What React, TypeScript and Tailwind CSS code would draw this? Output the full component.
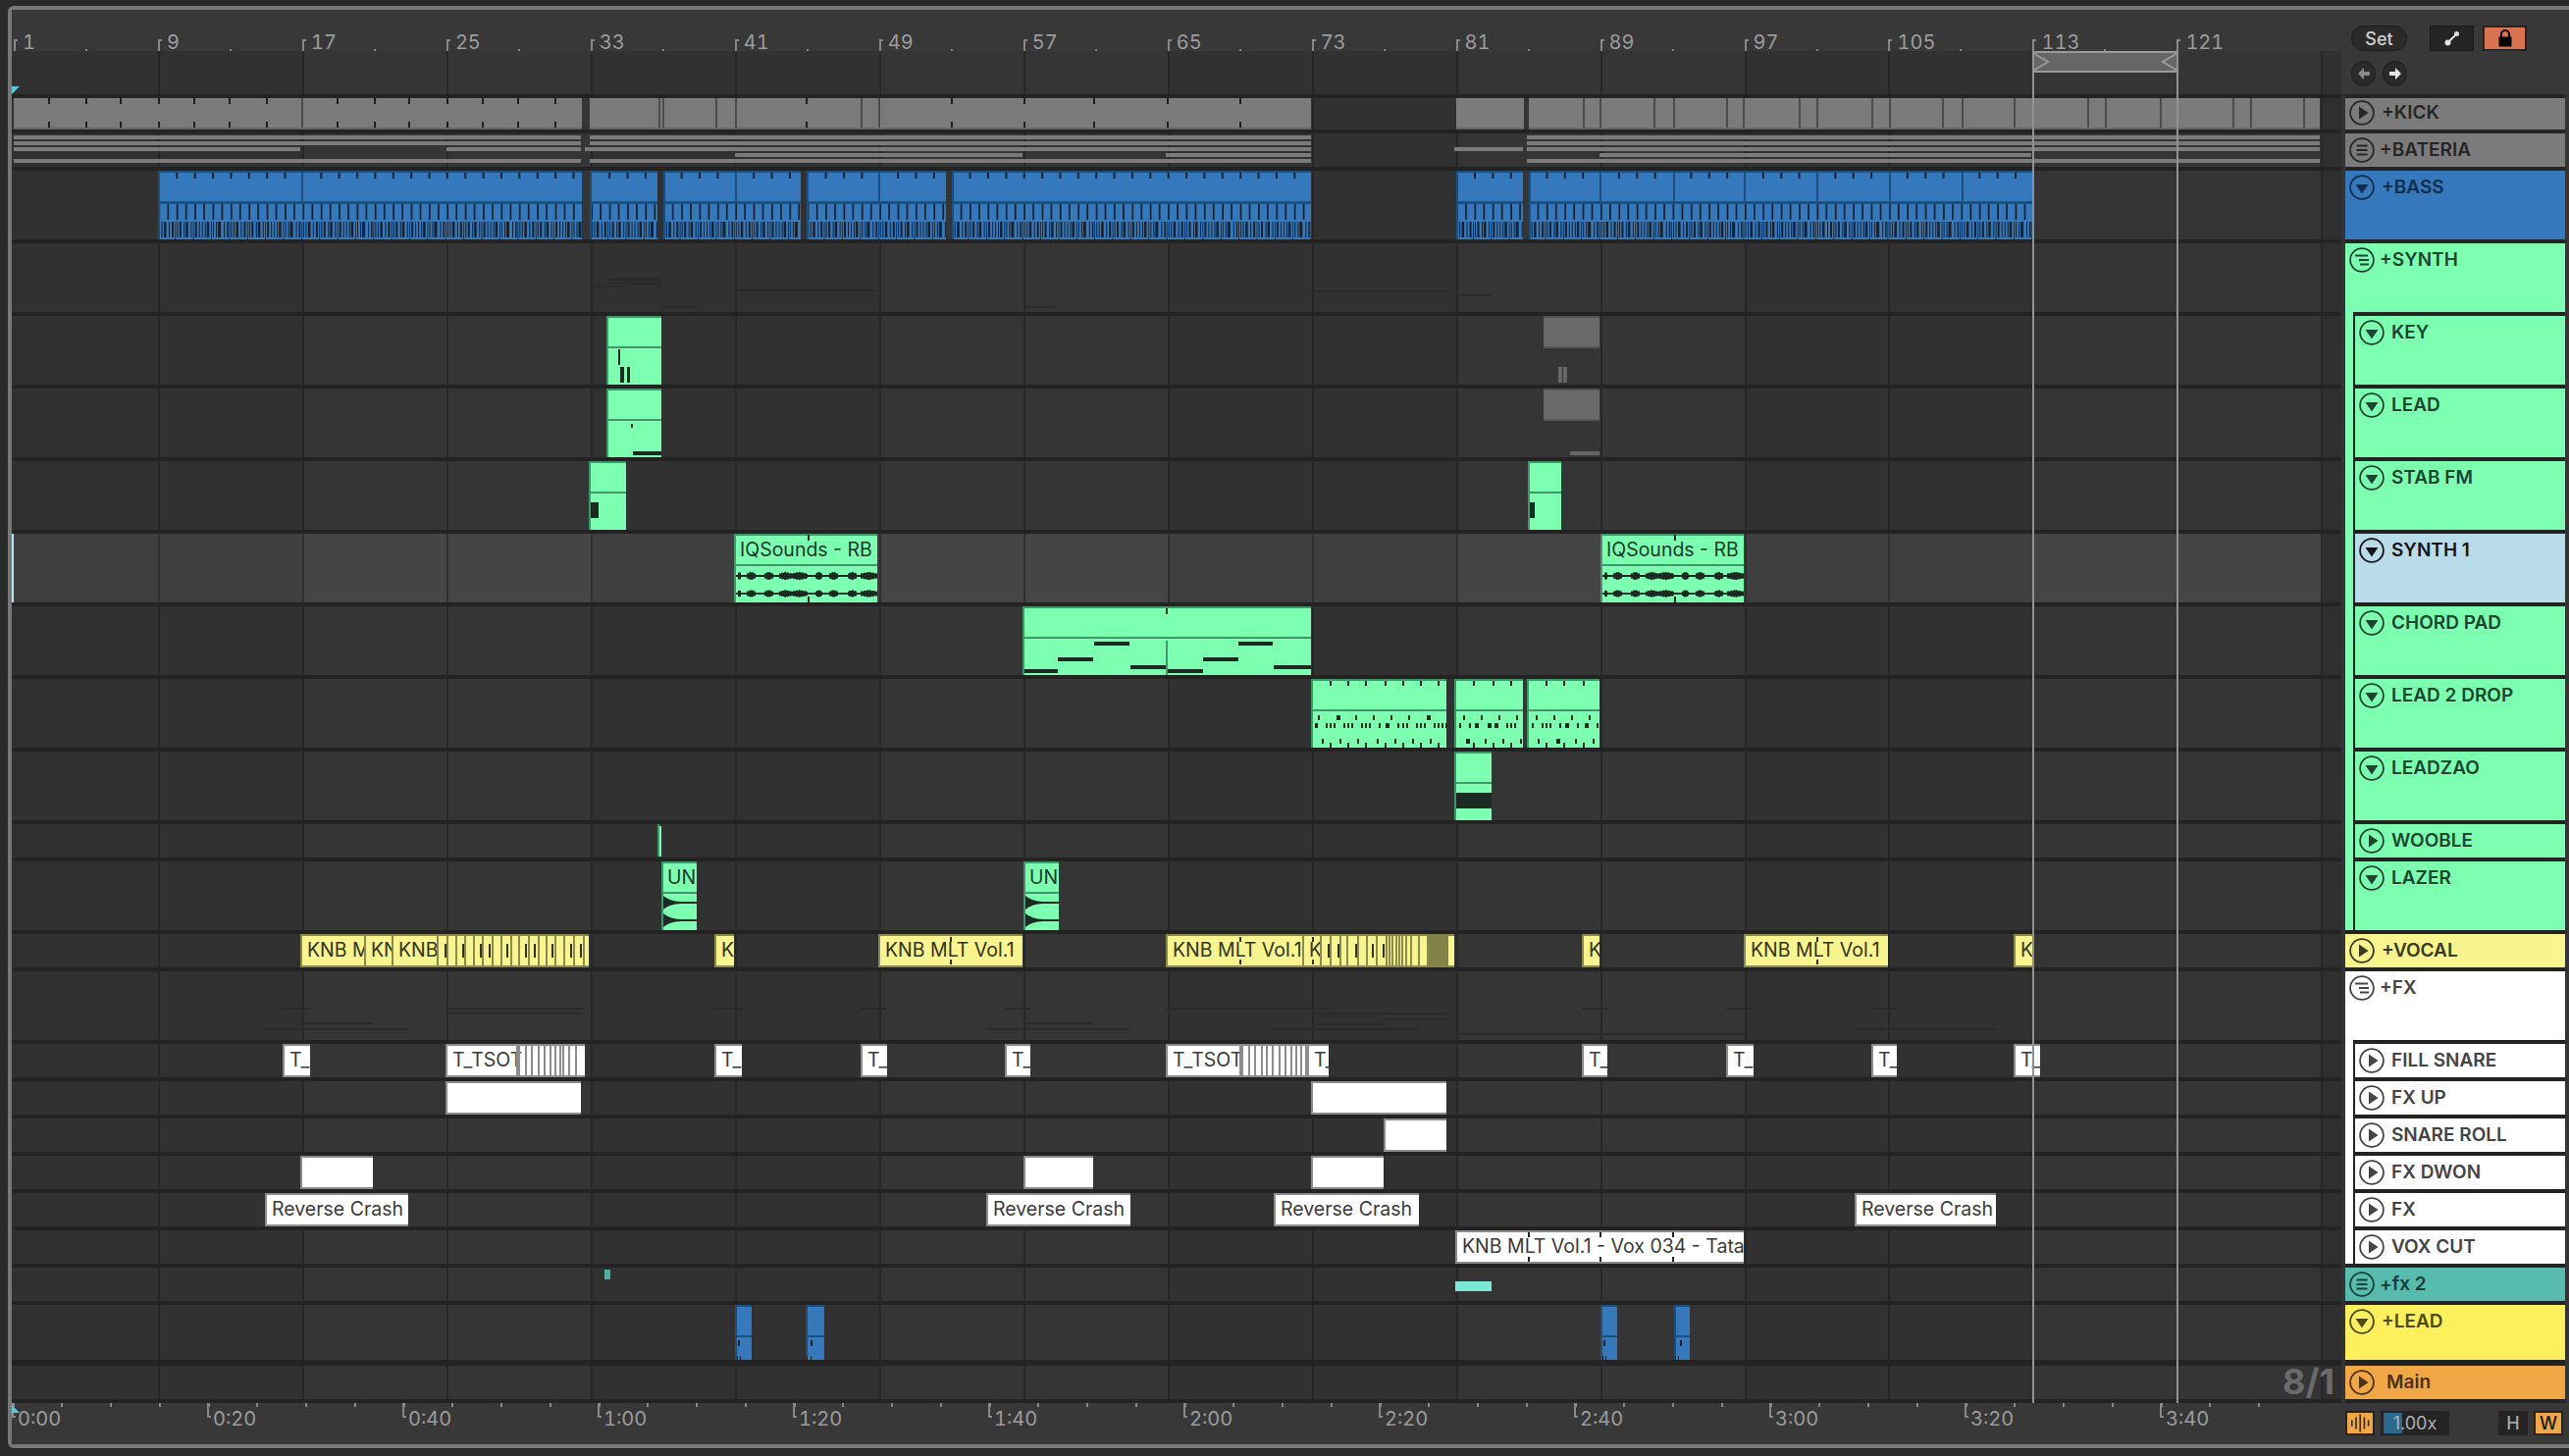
import React from 'react';

// screen x of the first lane pixel, everything below is written in screen pixels
const ORIGIN = 12;
const BAR = 18.37;
const barX = (i: number) => 14 + i * BAR;

type Mark = [number, number, number, number, string];
type ClipKind = 'green' | 'blue' | 'yellow' | 'white' | 'gray' | 'muted';

interface ClipData {
  x0: number;
  x1: number;
  kind: ClipKind;
  label?: string;
  tall?: boolean;
}

interface LaneData {
  top: number;
  h: number;
  cls: string;
  clips?: ClipData[];
  marks?: Mark[];
  selected?: boolean;
  extra?: React.ReactNode;
}

const NOTE = '#1c2a24';
const DIM = '#2a2a2a';
const KICK = '#7b7b7b';
const BLUE_NOTE = '#17222e';
const BLUE_LINE = '#1d4f7c';
const OLIVE = '#8a8a4e';

const clipStyles: Record<ClipKind, string> = {
  green: 'border-l-2 border-t-2 border-[#41966b] bg-[#7dffb1] text-[#1c3a2a]',
  blue: 'border-l-2 border-t-2 border-[#1d4f7c] bg-[#3578bb]',
  yellow: 'border-l-2 border-t-2 border-b-2 border-[#8a8a4e] bg-[#f8f58e] text-[#33331c]',
  white: 'border-l-2 border-t-2 border-b-2 border-[#8c8c8c] bg-white text-[#3a3a3a]',
  gray: 'bg-[#7b7b7b]',
  muted: 'border-t-2 border-[#555555] bg-transparent',
};

const clipDivider: Record<ClipKind, string> = {
  green: 'border-[#41966b]',
  blue: 'border-[#1d4f7c]',
  yellow: 'border-transparent',
  white: 'border-transparent',
  gray: 'border-transparent',
  muted: 'border-[#555555] bg-[#6a6a6a]',
};

function Clip({ x0, x1, kind, label, tall }: ClipData) {
  return (
    <div
      className={`absolute top-0 bottom-0 overflow-hidden ${clipStyles[kind]}`}
      style={{ left: x0 - ORIGIN, width: x1 - x0 }}
    >
      {tall ? (
        <div className={`h-[31px] border-b-2 pl-[4px] text-[19.5px] leading-[29px] whitespace-nowrap ${clipDivider[kind]}`}>
          {label}
        </div>
      ) : (
        <div className="h-full pl-[5px] text-[19.5px] leading-[29px] whitespace-nowrap">{label}</div>
      )}
    </div>
  );
}

function Marks({ h, top, marks }: { h: number; top: number; marks: Mark[] }) {
  return (
    <svg className="absolute left-0 top-0 pointer-events-none" width={2353} height={h}>
      {marks.map(([x0, x1, y0, y1, fill], i) => (
        <rect key={i} x={x0 - ORIGIN} y={y0 - top} width={x1 - x0} height={y1 - y0} fill={fill} />
      ))}
    </svg>
  );
}

// ---- kick / bateria ----
const kickTicks = [49, 87, 122, 161, 197, 233, 271, 343, 381, 416, 455, 491, 527, 565, 821, 969, 1043, 1114, 1189, 1263];
const kickLines = [307, 671, 675, 729, 749, 877, 895, 1613, 1630, 1685, 1705, 1759, 1776, 1833, 1851, 1907, 1925, 1979, 1999, 2052, 2127, 2145, 2201, 2275, 2293, 2347];
const kickMarks: Mark[] = [
  ...kickTicks.flatMap((x): Mark[] => [
    [x, x + 2, 100, 106, '#1f1f1f'],
    [x, x + 2, 124, 130, '#1f1f1f'],
  ]),
  ...kickLines.map((x): Mark => [x, x + 2, 100, 130, '#4c4c4c']),
  [14, 593, 130, 132, '#666666'],
  [601, 1336, 130, 132, '#666666'],
  [1484, 1553, 130, 132, '#666666'],
  [1558, 2364, 130, 132, '#666666'],
];

const bateriaMarks: Mark[] = [
  ...[138, 144, 162].flatMap((y): Mark[] => [
    [14, 592, y, y + 4, KICK],
    [601, 1336, y, y + 4, KICK],
    [1556, 2364, y, y + 4, KICK],
  ]),
  [14, 306, 150, 154, KICK],
  [455, 592, 150, 154, KICK],
  [596, 1336, 150, 154, KICK],
  [1482, 1552, 150, 154, KICK],
  [1556, 2364, 150, 154, KICK],
  [749, 1042, 156, 160, KICK],
  [1188, 1336, 156, 160, KICK],
  [1630, 2070, 156, 160, KICK],
];

// ---- bass ----
const bassClips: [number, number][] = [
  [161, 593],
  [601, 670],
  [676, 816],
  [822, 964],
  [970, 1336],
  [1484, 1552],
  [1558, 2071],
];
const bassDividers = [307, 749, 895, 1630, 1705, 1777, 1851, 1925, 1999];
const bassBlocks = [
  [[1, 1], [3.5, 1], [6, 2.5], [11, 1], [14, 2]],
  [[1, 1], [3.5, 2], [8, 1], [10, 2.5], [15, 1]],
  [[1, 2], [5, 1], [8, 1], [11, 1], [13, 2.5]],
  [[1, 1], [4, 1], [6, 3], [12, 1], [15, 1.5]],
];

function pushDividers(out: Mark[], a: number, b: number) {
  out.push([a + 2, b, 206, 208, BLUE_LINE]);
  for (const d of bassDividers) {
    if (d > a + 2 && d < b) out.push([d, d + 2, 176, 206, BLUE_LINE]);
  }
}

function bassMarks(): Mark[] {
  const out: Mark[] = [];
  for (const [a, b] of bassClips) {
    for (let i = 0; i < 130; i++) {
      const x = barX(i);
      if (x + BAR < a || x > b) continue;
      const clampRect = (l: number, r: number, y0: number, y1: number, fill: string) => {
        const c0 = Math.max(l, a + 2);
        const c1 = Math.min(r, b);
        if (c1 > c0) out.push([c0, c1, y0, y1, fill]);
      };
      if (x > a + 2 && !bassDividers.some((d) => Math.abs(d - x) < 3)) clampRect(x, x + 2, 176, 182, BLUE_NOTE);
      clampRect(x + 0.5, x + 2.2, 208, 224, BLUE_NOTE);
      clampRect(x + 9.5, x + 11.2, 208, 224, BLUE_NOTE);
      for (const [o, w] of bassBlocks[i % 4]) clampRect(x + o, x + o + w, 226, 242, BLUE_NOTE);
      clampRect(x + 17.4, x + 18.2, 226, 244, BLUE_NOTE);
    }
    pushDividers(out, a, b);
  }
  return out;
}

// ---- lead 2 drop, values read off a 3x crop ----
const z5 = (z: number) => 1300 + z / 3;
const lead2: [number, number, number][] = [
  ...[129, 243, 297, 351, 405].map((z): [number, number, number] => [z, 729, 2]),
  ...[186, 462].map((z): [number, number, number] => [z, 729, 4]),
  ...[153, 165, 177, 207, 219, 231, 261, 273, 285, 315, 372, 387, 399, 429, 441, 453, 483, 495, 507, 519].map((z): [number, number, number] => [z, 737, 2]),
  [120, 737, 3],
  [336, 737, 4],
  ...[141, 195, 249, 309, 363, 417, 471].map((z): [number, number, number] => [z, 753, 2]),
  ...[573, 627, 681, 735, 795, 849, 903, 957].map((z): [number, number, number] => [z, 729, 2]),
  ...[561, 591, 705, 717, 729, 783, 813, 825, 837, 867, 921, 981].map((z): [number, number, number] => [z, 737, 2]),
  ...[609, 648, 669, 885, 945].map((z): [number, number, number] => [z, 737, 4]),
  ...[639, 693, 747, 801, 915, 969].map((z): [number, number, number] => [z, 753, 2]),
  ...[582, 858].map((z): [number, number, number] => [z, 753, 4]),
];
const lead2Ticks = [165, 219, 273, 333, 387, 441, 495, 603, 663, 717, 825, 879, 939];
const lead2Marks: Mark[] = [
  ...lead2.map(([z, y, w]): Mark => [z5(z), z5(z) + w, y, y + 5, NOTE]),
  ...lead2Ticks.flatMap((z): Mark[] => [
    [z5(z), z5(z) + 2, 694, 699, NOTE],
    [z5(z), z5(z) + 2, 757, 762, NOTE],
  ]),
];

// ---- synth 1 audio ----
const blobs = [[3, 2], [15, 5], [33, 5], [50, 7], [64, 9], [84, 4], [99, 5], [118, 5], [135, 9]];
function waveMarks(x0: number): Mark[] {
  const out: Mark[] = [];
  for (let i = 0; i < 144; i++) {
    let amp = 1;
    for (const [c, w] of blobs) {
      const d = Math.abs(i - c);
      if (d < w) amp = Math.max(amp, 4.2 - (d / w) * 1.8 - (i % 3 === 0 ? 0.5 : 0));
    }
    out.push([x0 + i, x0 + i + 1, 587 - amp, 587 + amp, NOTE]);
    out.push([x0 + i, x0 + i + 1, 605 - amp * 0.9, 605 + amp * 0.9, NOTE]);
  }
  out.push([x0 + 73, x0 + 75, 545, 551, NOTE], [x0 + 73, x0 + 75, 608, 614, NOTE]);
  return out;
}

function lazerWave(x0: number, x1: number) {
  const shape = (cy: number) =>
    `M${x0 + 2 - ORIGIN} ${cy - 7} Q${x0 + 8 - ORIGIN} ${cy - 1.5} ${x0 + 20 - ORIGIN} ${cy - 1} L${x1 - ORIGIN} ${cy - 1} L${x1 - ORIGIN} ${cy + 1} L${x0 + 20 - ORIGIN} ${cy + 1} Q${x0 + 8 - ORIGIN} ${cy + 1.5} ${x0 + 2 - ORIGIN} ${cy + 7} Z`;
  return (
    <svg key={x0} className="absolute left-0 top-0 pointer-events-none" width={2353} height={70}>
      <path d={shape(920 - 878)} fill={NOTE} />
      <path d={shape(938 - 878)} fill={NOTE} />
    </svg>
  );
}

// ---- vocal ----
const vocalLines = [445, 455, 464, 473, 482, 491, 501, 510, 520, 528, 538, 548, 556, 565, 574, 584, 594, 1345, 1355, 1365, 1372, 1383, 1392, 1402, 1412, 1415, 1418, 1422, 1425, 1428, 1432, 1437, 1445, 1454];
const vocalFrags = [453, 471, 489, 498, 516, 535, 544, 562, 581, 591, 1353, 1363, 1381, 1398, 1409];
const vocalTicks = [968, 1263, 1337, 1851];
const vocalMarks: Mark[] = [
  ...vocalLines.map((x): Mark => [x, x + 2, 952, 986, OLIVE]),
  ...vocalFrags.map((x): Mark => [x, x + 2, 962, 976, '#33331c']),
  [1456, 1476, 952, 986, '#838349'],
  ...vocalTicks.flatMap((x): Mark[] => [
    [x, x + 2, 955, 960, '#33331c'],
    [x, x + 2, 978, 983, '#33331c'],
  ]),
];

// ---- fill snare stripes ----
const snareStripes = [528, 535, 541, 548, 554, 560, 565, 570, 573, 579, 586, 1265, 1272, 1278, 1285, 1290, 1296, 1303, 1309, 1315, 1320, 1325, 1330];
const snareMarks: Mark[] = [
  ...snareStripes.map((x): Mark => [x, x + 2, 1066, 1096, '#8c8c8c']),
  [526, 528, 1066, 1096, '#8c8c8c'],
  [1263, 1265, 1066, 1096, '#8c8c8c'],
  [1332, 1334, 1066, 1096, '#8c8c8c'],
];

const tall = (x0: number, x1: number, label?: string): ClipData => ({ x0, x1, kind: 'green', tall: true, label });
const blueTall = (x0: number, x1: number): ClipData => ({ x0, x1, kind: 'blue', tall: true });
const muted = (x0: number, x1: number): ClipData => ({ x0, x1, kind: 'muted', tall: true });
const yellow = (x0: number, x1: number, label?: string): ClipData => ({ x0, x1, kind: 'yellow', label });
const white = (x0: number, x1: number, label?: string): ClipData => ({ x0, x1, kind: 'white', label });
const gray = (x0: number, x1: number): ClipData => ({ x0, x1, kind: 'gray' });

const lanes: LaneData[] = [
  { top: 100, h: 32, cls: 'h-[32px]', clips: [gray(14, 593), gray(601, 1336), gray(1484, 1553), gray(1558, 2364)], marks: kickMarks },
  { top: 136, h: 34, cls: 'h-[34px]', marks: bateriaMarks },
  { top: 174, h: 70, cls: 'h-[70px]', clips: bassClips.map(([a, b]) => blueTall(a, b)), marks: bassMarks() },
  {
    top: 248,
    h: 70,
    cls: 'h-[70px]',
    marks: [
      [618, 673, 284, 286, DIM],
      [618, 673, 288, 290, DIM],
      [601, 638, 291, 293, DIM],
      [749, 894, 295, 297, DIM],
      [1336, 1474, 296, 298, DIM],
      [1484, 1520, 300, 302, DIM],
      [673, 710, 312, 314, DIM],
      [1043, 1078, 312, 314, DIM],
    ],
  },
  {
    top: 322,
    h: 70,
    cls: 'h-[70px]',
    clips: [tall(618, 674), muted(1573, 1630)],
    marks: [
      [630, 632, 356, 372, NOTE],
      [632, 636, 374, 390, NOTE],
      [639, 642, 374, 390, NOTE],
      [1588, 1592, 374, 390, '#666666'],
      [1593, 1597, 374, 390, '#666666'],
    ],
  },
  {
    top: 396,
    h: 70,
    cls: 'h-[70px]',
    clips: [tall(618, 674), muted(1573, 1630)],
    marks: [
      [643, 645, 432, 436, NOTE],
      [645, 674, 460, 464, NOTE],
      [1600, 1630, 460, 464, '#666666'],
    ],
  },
  {
    top: 470,
    h: 70,
    cls: 'h-[70px]',
    clips: [tall(600, 638), tall(1557, 1591)],
    marks: [
      [602, 610, 512, 528, NOTE],
      [1559, 1564, 512, 528, NOTE],
    ],
  },
  {
    top: 544,
    h: 70,
    cls: 'h-[70px]',
    selected: true,
    clips: [tall(748, 894, 'IQSounds - RB'), tall(1631, 1777, 'IQSounds - RB')],
    marks: [...waveMarks(750), ...waveMarks(1633)],
  },
  {
    top: 618,
    h: 70,
    cls: 'h-[70px]',
    clips: [tall(1042, 1336)],
    marks: [
      [1188, 1190, 620, 626, NOTE],
      [1188, 1190, 653, 688, '#41966b'],
      [1115, 1151, 654, 658, NOTE],
      [1262, 1297, 654, 658, NOTE],
      [1078, 1114, 670, 674, NOTE],
      [1226, 1262, 670, 674, NOTE],
      [1152, 1188, 678, 682, NOTE],
      [1298, 1336, 678, 682, NOTE],
      [1044, 1078, 682, 686, NOTE],
      [1190, 1226, 682, 686, NOTE],
    ],
  },
  { top: 692, h: 70, cls: 'h-[70px]', clips: [tall(1336, 1474), tall(1482, 1552), tall(1556, 1630)], marks: lead2Marks },
  {
    top: 766,
    h: 70,
    cls: 'h-[70px]',
    clips: [tall(1482, 1520)],
    marks: [[1484, 1520, 808, 824, NOTE]],
  },
  {
    top: 840,
    h: 34,
    cls: 'h-[34px]',
    marks: [
      [670, 672, 840, 873, '#41966b'],
      [672, 674, 842, 873, '#7dffb1'],
    ],
  },
  {
    top: 878,
    h: 70,
    cls: 'h-[70px]',
    clips: [tall(674, 710, 'UN'), tall(1043, 1079, 'UN')],
    extra: [lazerWave(674, 710), lazerWave(1043, 1079)],
  },
  {
    top: 952,
    h: 34,
    cls: 'h-[34px]',
    clips: [
      yellow(306, 371, 'KNB M'),
      yellow(371, 399, 'KN'),
      yellow(399, 445, 'KNB'),
      yellow(445, 600),
      yellow(728, 748, 'K'),
      yellow(895, 1042, 'KNB MLT Vol.1'),
      yellow(1188, 1327, 'KNB MLT Vol.1'),
      yellow(1327, 1345, 'K'),
      yellow(1345, 1482),
      yellow(1612, 1630, 'K'),
      yellow(1777, 1924, 'KNB MLT Vol.1'),
      yellow(2052, 2071, 'K'),
    ],
    marks: vocalMarks,
  },
  {
    top: 990,
    h: 70,
    cls: 'h-[70px]',
    marks: [
      [288, 316, 1027, 1029, DIM],
      [454, 596, 1027, 1029, DIM],
      [728, 756, 1027, 1029, DIM],
      [877, 904, 1027, 1029, DIM],
      [1024, 1050, 1027, 1029, DIM],
      [1188, 1354, 1027, 1029, DIM],
      [1612, 1638, 1027, 1029, DIM],
      [1759, 1787, 1027, 1029, DIM],
      [1907, 1933, 1027, 1029, DIM],
      [454, 592, 1032, 1034, DIM],
      [1336, 1474, 1032, 1034, DIM],
      [1410, 1474, 1038, 1040, DIM],
      [307, 380, 1042, 1044, DIM],
      [1043, 1114, 1042, 1044, DIM],
      [1336, 1410, 1043, 1045, DIM],
      [270, 416, 1048, 1050, DIM],
      [1005, 1152, 1048, 1050, DIM],
      [1298, 1446, 1048, 1050, DIM],
      [1890, 2034, 1048, 1050, DIM],
      [1483, 1777, 1053, 1055, DIM],
    ],
  },
  {
    top: 1064,
    h: 34,
    cls: 'h-[34px]',
    clips: [
      white(288, 316, 'T_'),
      white(454, 596, 'T_TSOT'),
      white(728, 756, 'T_'),
      white(877, 904, 'T_'),
      white(1024, 1050, 'T_'),
      white(1188, 1332, 'T_TSOT'),
      white(1332, 1354, 'T_'),
      white(1612, 1638, 'T_'),
      white(1759, 1787, 'T_'),
      white(1907, 1933, 'T_'),
      white(2052, 2079, 'T_'),
    ],
    marks: snareMarks,
  },
  { top: 1102, h: 34, cls: 'h-[34px]', clips: [white(454, 592), white(1336, 1474)] },
  { top: 1140, h: 34, cls: 'h-[34px]', clips: [white(1410, 1474)] },
  { top: 1178, h: 34, cls: 'h-[34px]', clips: [white(306, 380), white(1043, 1114), white(1336, 1410)] },
  {
    top: 1216,
    h: 34,
    cls: 'h-[34px]',
    clips: [white(270, 416, 'Reverse Crash'), white(1005, 1152, 'Reverse Crash'), white(1298, 1446, 'Reverse Crash'), white(1890, 2034, 'Reverse Crash')],
  },
  {
    top: 1254,
    h: 34,
    cls: 'h-[34px]',
    clips: [white(1483, 1777, 'KNB MLT Vol.1 - Vox 034 - Tata')],
    marks: [
      [1557, 1559, 1256, 1261, '#222222'],
      [1557, 1559, 1281, 1286, '#222222'],
      [1630, 1632, 1256, 1261, '#222222'],
      [1630, 1632, 1281, 1286, '#222222'],
      [1704, 1706, 1256, 1261, '#222222'],
      [1704, 1706, 1281, 1286, '#222222'],
    ],
  },
  {
    top: 1292,
    h: 34,
    cls: 'h-[34px]',
    marks: [
      [616, 622, 1294, 1304, '#4fb0a0'],
      [1483, 1520, 1306, 1316, '#7ae8d4'],
    ],
  },
  {
    top: 1330,
    h: 56,
    cls: 'h-[56px]',
    clips: [blueTall(749, 766), blueTall(821, 840), blueTall(1631, 1648), blueTall(1706, 1722)],
    marks: [
      [752, 754, 1366, 1372, BLUE_NOTE],
      [751, 752, 1382, 1386, BLUE_NOTE],
      [754, 755, 1382, 1386, BLUE_NOTE],
      [826, 828, 1366, 1372, BLUE_NOTE],
      [822, 823, 1382, 1386, BLUE_NOTE],
      [826, 827, 1382, 1386, BLUE_NOTE],
      [1634, 1636, 1366, 1372, BLUE_NOTE],
      [1633, 1634, 1382, 1386, BLUE_NOTE],
      [1636, 1637, 1382, 1386, BLUE_NOTE],
      [1712, 1714, 1366, 1372, BLUE_NOTE],
      [1707, 1708, 1382, 1386, BLUE_NOTE],
      [1710, 1711, 1382, 1386, BLUE_NOTE],
    ],
  },
  {
    top: 1392,
    h: 34,
    cls: 'h-[34px] mt-[2px]',
    extra: (
      <span className="absolute left-[2314px] top-[0px] z-10 text-[36px] leading-[32px] font-bold text-[#6a6a6a]">8/1</span>
    ),
  },
];

const LANE_BG =
  'bg-[repeating-linear-gradient(90deg,#272727_2px,#272727_4px,transparent_4px,transparent_148.96px),repeating-linear-gradient(90deg,#313131_2px,#313131_296px,#353535_296px,#353535_590px)]';
const LANE_BG_SELECTED =
  'bg-[repeating-linear-gradient(90deg,#2f2f2f_2px,#2f2f2f_4px,transparent_4px,transparent_148.96px),repeating-linear-gradient(90deg,#3f3f3f_2px,#3f3f3f_296px,#454545_296px,#454545_590px)]';

function Lane({ lane }: { lane: LaneData }) {
  return (
    <div className={`flex ${lane.cls}`}>
      <div className={`relative w-[2353px] ${lane.selected ? LANE_BG_SELECTED : LANE_BG}`}>
        {/* the pattern has a grid line at bar 1 that the track does not show */}
        <div className={`absolute left-0 top-0 bottom-0 w-[4px] ${lane.selected ? 'bg-[#3f3f3f]' : 'bg-[#313131]'}`} />
        {lane.selected && <div className="absolute left-0 top-0 bottom-0 w-[2px] bg-[#aee8f0]" />}
        {lane.clips?.map((c, i) => <Clip key={i} {...c} />)}
        {lane.marks && <Marks h={lane.h} top={lane.top} marks={lane.marks} />}
        {lane.extra}
      </div>
      <div className="w-[2px] bg-[#272727]" />
      <div className="w-[19px] bg-[#2f2f2f]" />
    </div>
  );
}

function TrackIcon({ kind, color }: { kind: 'play' | 'down' | 'closed' | 'open'; color: string }) {
  return (
    <svg width="26" height="26" viewBox="0 0 26 26" className="shrink-0">
      <circle cx="13" cy="13" r="11.9" fill="none" stroke={color} strokeWidth="1.8" />
      {kind === 'play' && <polygon points="10,6.5 10,19.5 19.5,13" fill={color} />}
      {kind === 'down' && <polygon points="6.5,10 19.5,10 13,19.5" fill={color} />}
      {kind === 'closed' && (
        <g fill={color}>
          <rect x="7.5" y="7.5" width="11" height="2" />
          <rect x="7.5" y="12" width="11" height="2" />
          <rect x="7.5" y="16.5" width="11" height="2" />
        </g>
      )}
      {kind === 'open' && (
        <g fill={color}>
          <rect x="6" y="7.5" width="13" height="2" />
          <rect x="10" y="12" width="10" height="2" />
          <rect x="11" y="16.5" width="9" height="2" />
        </g>
      )}
    </svg>
  );
}

interface TrackHeadProps {
  name: string;
  icon: 'play' | 'down' | 'closed' | 'open';
  cls: string;
  ink: string;
  gap?: string;
  pad?: string;
}

function TrackHead({ name, icon, cls, ink, gap = 'gap-[7px]', pad = 'pt-[4px]' }: TrackHeadProps) {
  return (
    <div className={`flex items-start pl-[4px] font-semibold text-[19px] leading-[26px] ${pad} ${gap} ${cls}`} style={{ color: ink }}>
      <TrackIcon kind={icon} color={ink} />
      <span className="whitespace-nowrap">{name}</span>
    </div>
  );
}

// wrapper of a nested track: the group colour stays on the left as a strip
function Child({ children }: { children: React.ReactNode }) {
  return <div className="ml-[8px] bg-[#232323] pt-[4px] pl-[2px]">{children}</div>;
}

function TrackHeads() {
  const greenBg = 'bg-[#7dffb1]';
  const greenInk = '#1c4630';
  const whiteBg = 'bg-white';
  return (
    <div className="flex flex-col gap-[4px]">
      <TrackHead name="+KICK" icon="play" cls="h-[32px] bg-[#7b7b7b]" ink="#262626" pad="pt-[2px]" />
      <TrackHead name="+BATERIA" icon="closed" cls="h-[34px] bg-[#7b7b7b]" ink="#262626" gap="gap-[5px]" />
      <TrackHead name="+BASS" icon="down" cls="h-[70px] bg-[#3578bb]" ink="#0f2e4d" />
      <div className={greenBg}>
        <TrackHead name="+SYNTH" icon="open" cls={`h-[70px] ${greenBg}`} ink={greenInk} gap="gap-[5px]" />
        {['KEY', 'LEAD', 'STAB FM'].map((n) => (
          <Child key={n}>
            <TrackHead name={n} icon="down" cls={`h-[70px] ${greenBg}`} ink={greenInk} />
          </Child>
        ))}
        <Child>
          <TrackHead name="SYNTH 1" icon="down" cls="h-[70px] bg-[#b9dcea]" ink="#141414" />
        </Child>
        {['CHORD PAD', 'LEAD 2 DROP', 'LEADZAO'].map((n) => (
          <Child key={n}>
            <TrackHead name={n} icon="down" cls={`h-[70px] ${greenBg}`} ink={greenInk} />
          </Child>
        ))}
        <Child>
          <TrackHead name="WOOBLE" icon="play" cls={`h-[34px] ${greenBg}`} ink={greenInk} />
        </Child>
        <Child>
          <TrackHead name="LAZER" icon="down" cls={`h-[70px] ${greenBg}`} ink={greenInk} />
        </Child>
      </div>
      <TrackHead name="+VOCAL" icon="play" cls="h-[34px] bg-[#f8f58e]" ink="#3a3a20" />
      <div className={whiteBg}>
        <TrackHead name="+FX" icon="open" cls={`h-[70px] ${whiteBg}`} ink="#444444" gap="gap-[5px]" />
        {['FILL SNARE', 'FX UP', 'SNARE ROLL', 'FX DWON', 'FX', 'VOX CUT'].map((n) => (
          <Child key={n}>
            <TrackHead name={n} icon="play" cls={`h-[34px] ${whiteBg}`} ink="#444444" />
          </Child>
        ))}
      </div>
      <TrackHead name="+fx 2" icon="closed" cls="h-[34px] bg-[#57bcad]" ink="#143f3a" gap="gap-[5px]" />
      <TrackHead name="+LEAD" icon="down" cls="h-[56px] bg-[#fdf05c]" ink="#4d4a18" />
      <TrackHead name="Main" icon="play" cls="h-[34px] mt-[2px] bg-[#f2a746]" ink="#4a3212" gap="gap-[12px]" />
    </div>
  );
}

const barLabels = Array.from({ length: 16 }, (_, i) => 1 + i * 8);
const timeLabels = ['0:00', '0:20', '0:40', '1:00', '1:20', '1:40', '2:00', '2:20', '2:40', '3:00', '3:20', '3:40'];

function TopRuler() {
  return (
    <div className="relative h-[42px] bg-[#383838] text-[20px] leading-[20px] text-[#9c9c9c] tabular-nums">
      {barLabels.map((b, i) => {
        const x = barX(i * 8) - ORIGIN;
        return (
          <React.Fragment key={b}>
            {b < 129 && (
              <span className="absolute top-[23px]" style={{ left: x + 9 }}>
                {b}
              </span>
            )}
            <div className="absolute top-[30px] h-[12px] w-[2px] bg-[#888888]" style={{ left: x }} />
            <div className="absolute top-[30px] h-[2px] w-[2px] bg-[#888888]" style={{ left: x + 2 }} />
            {b < 121 && <div className="absolute top-[40px] h-[2px] w-[2px] bg-[#888888]" style={{ left: x + 73 }} />}
          </React.Fragment>
        );
      })}
    </div>
  );
}

function BottomRuler() {
  return (
    <div className="relative h-[42px] bg-[#383838] text-[20px] leading-[20px] text-[#9c9c9c] tabular-nums">
      {Array.from({ length: 47 }, (_, i) => (
        <div key={i} className="absolute top-0 h-[4px] w-[2px] bg-[#888888]" style={{ left: 0.5 + i * 49.75 }} />
      ))}
      {timeLabels.map((t, i) => (
        <React.Fragment key={t}>
          <div className="absolute top-0 h-[15px] w-[2px] bg-[#888888]" style={{ left: i * 199 }} />
          <div className="absolute top-[13px] h-[2px] w-[2px] bg-[#888888]" style={{ left: 2 + i * 199 }} />
          <span className="absolute top-[6px]" style={{ left: i * 199 + 6 }}>
            {t}
          </span>
        </React.Fragment>
      ))}
      <svg className="absolute left-0 top-[2px]" width="8" height="8">
        <polygon points="0,0 8,8 0,8" fill="#5ec8d8" />
      </svg>
    </div>
  );
}

function LoopBand() {
  return (
    <div className={`relative h-[44px] ${LANE_BG}`}>
      <div className="absolute left-0 top-0 bottom-0 w-[4px] bg-[#313131]" />
      <svg className="absolute left-[2059px] top-0" width="149" height="22">
        <rect x="0" y="0" width="149" height="22" fill="#666666" />
        <rect x="0" y="0" width="149" height="2" fill="#9a9a9a" />
        <rect x="0" y="20" width="149" height="2" fill="#9a9a9a" />
        <path d="M1 2 L16 11 L1 20" fill="none" stroke="#9a9a9a" strokeWidth="2" />
        <path d="M148 2 L133 11 L148 20" fill="none" stroke="#9a9a9a" strokeWidth="2" />
      </svg>
      <svg className="absolute left-0 top-[36px]" width="8" height="8">
        <polygon points="0,0 8,0 0,8" fill="#5ec8d8" />
      </svg>
    </div>
  );
}

function TopControls() {
  return (
    <div className="flex h-[86px] flex-col gap-[10px] bg-[#383838] pl-[10px] pt-[16px]">
      <div className="flex">
        <div className="flex h-[26px] w-[57px] items-center justify-center rounded-full border border-[#1c1c1c] bg-[#2a2a2a] text-[18px] font-medium text-[#d0d0d0]">
          Set
        </div>
        <div className="ml-[23px] flex h-[26px] w-[45px] items-center justify-center border border-[#1a1a1a] bg-[#242424]">
          <svg width="16" height="16" viewBox="0 0 16 16">
            <path d="M4 12 L12 4" stroke="#e0e0e0" strokeWidth="2" />
            <circle cx="12.5" cy="3.5" r="2.5" fill="#e0e0e0" />
            <circle cx="3.5" cy="12.5" r="3" fill="#e0e0e0" />
          </svg>
        </div>
        <div className="ml-[9px] flex h-[26px] w-[45px] items-center justify-center border-2 border-[#242424] bg-[#d9734f]">
          <svg width="16" height="18" viewBox="0 0 16 18">
            <path d="M4 8 V5 a4 4 0 0 1 8 0 V8" fill="none" stroke="#000000" strokeWidth="2" />
            <rect x="1.5" y="7.5" width="13" height="10" fill="#000000" />
          </svg>
        </div>
      </div>
      <div className="flex gap-[7px]">
        <div className="flex h-[26px] w-[25px] items-center justify-center rounded-full border border-[#1c1c1c] bg-[#2a2a2a]">
          <svg width="14" height="14" viewBox="0 0 14 14">
            <path d="M7 1 L1 7 L7 13 V9 H13 V5 H7 Z" fill="#8a8a8a" />
          </svg>
        </div>
        <div className="flex h-[26px] w-[25px] items-center justify-center rounded-full border border-[#1c1c1c] bg-[#2a2a2a]">
          <svg width="14" height="14" viewBox="0 0 14 14">
            <path d="M7 1 L13 7 L7 13 V9 H1 V5 H7 Z" fill="#e6e6e6" />
          </svg>
        </div>
      </div>
    </div>
  );
}

function BottomControls() {
  const bars = [[4, 6], [8.2, 12], [12.4, 18], [16.6, 12], [20.8, 6]];
  return (
    <div className="flex h-[42px] items-start bg-[#383838] pl-[4px] pt-[8px]">
      <div className="h-[25px] w-[30px] border-2 border-[#242424] bg-[#f2a746]">
        <svg width="26" height="21" viewBox="0 0 26 21">
          {bars.map(([x, h]) => (
            <rect key={x} x={x} y={10.5 - h / 2} width="1.6" height={h} fill="#2a2a2a" />
          ))}
        </svg>
      </div>
      <div className="relative ml-[6px] flex h-[25px] w-[70px] items-center justify-center border-2 border-[#242424] bg-[#242424] text-[18px] text-[#b0b0b0]">
        <div className="absolute left-[1px] top-0 bottom-0 w-[19px] bg-[#2a6a8e]" />
        <span className="relative">1.00x</span>
      </div>
      <div className="ml-[50px] flex h-[25px] w-[30px] items-center justify-center bg-[#242424] text-[18px] font-medium text-[#a8a8a8]">H</div>
      <div className="ml-[6px] flex h-[25px] w-[30px] items-center justify-center border-2 border-[#242424] bg-[#f2a746] text-[18px] font-medium text-[#1a1a1a]">W</div>
    </div>
  );
}

export default function App() {
  return (
    <div className="h-[1484px] w-[2618px] overflow-hidden bg-[#2a2a2a] pt-[6px] pb-[8px] pl-[8px] font-[Inter,sans-serif]">
      <div className="flex h-[1470px] rounded-l-[6px] border-y-4 border-l-4 border-[#777777] bg-[#343434]">
        <div className="relative w-[2374px]">
          <TopRuler />
          <LoopBand />
          <div className="flex flex-col gap-[4px] bg-[#232323] py-[4px]">
            {lanes.map((l) => (
              <Lane key={l.top} lane={l} />
            ))}
          </div>
          <BottomRuler />
          {/* loop locators run over all the lanes */}
          <div className="absolute left-[2059px] top-[42px] h-[1378px] w-[2px] bg-[#929292]" />
          <div className="absolute left-[2206px] top-[42px] h-[1378px] w-[2px] bg-[#929292]" />
        </div>
        <div className="flex-1">
          <TopControls />
          <div className="bg-[#343434] px-[4px]">
            <div className="bg-[#232323] py-[4px]">
              <TrackHeads />
            </div>
          </div>
          <BottomControls />
        </div>
      </div>
    </div>
  );
}
